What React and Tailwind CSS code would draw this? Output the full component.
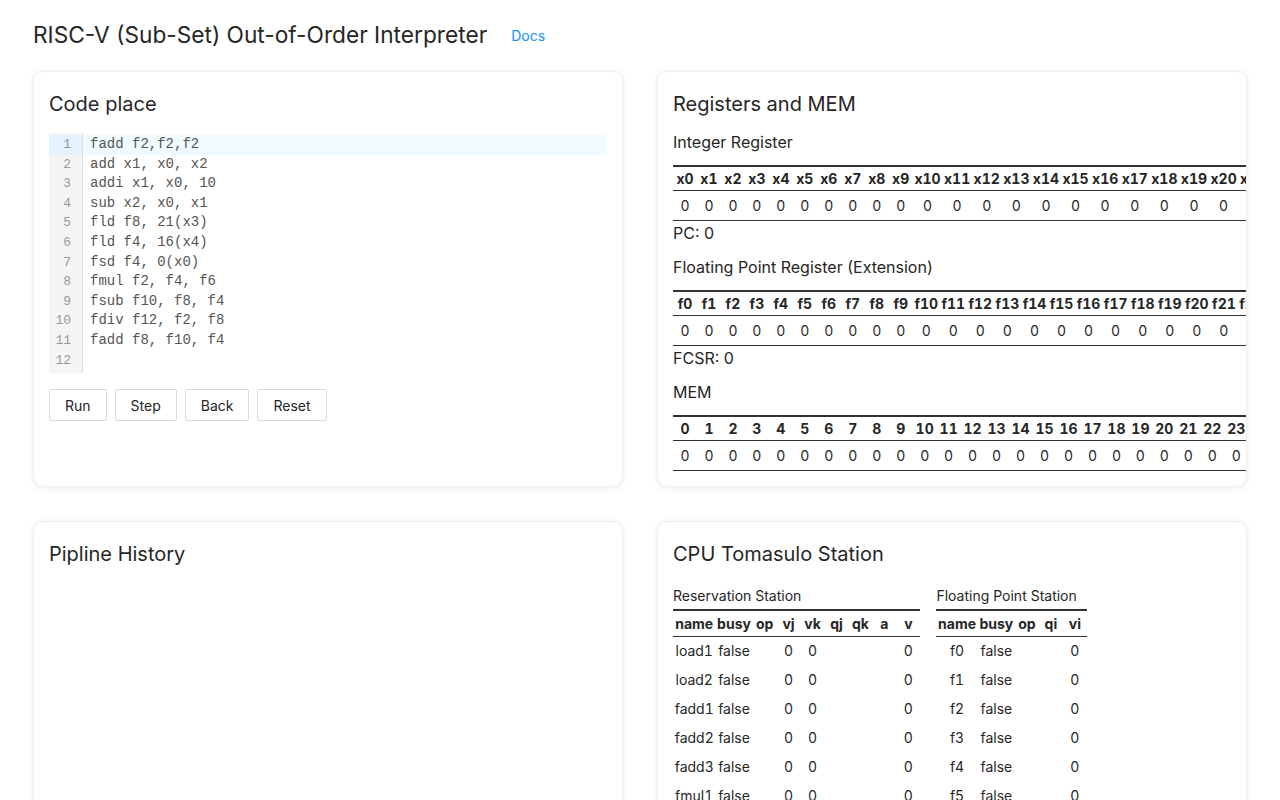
import React from 'react';

const code = [
  'fadd f2,f2,f2',
  'add x1, x0, x2',
  'addi x1, x0, 10',
  'sub x2, x0, x1',
  'fld f8, 21(x3)',
  'fld f4, 16(x4)',
  'fsd f4, 0(x0)',
  'fmul f2, f4, f6',
  'fsub f10, f8, f4',
  'fdiv f12, f2, f8',
  'fadd f8, f10, f4',
  '',
];

const range = (n) => Array.from({ length: n }, (_, i) => i);

const stations = ['load1', 'load2', 'fadd1', 'fadd2', 'fadd3', 'fmul1', 'fmul2', 'fdiv1'];

function Card({ title, children }) {
  return (
    <div className="overflow-hidden rounded-[10px] border border-[#f0f0f0] bg-white p-[15px] shadow-[0_1px_6px_rgba(0,0,0,0.08)]">
      <h2 className="text-[20px] leading-[34px] text-[#262626]">{title}</h2>
      {children}
    </div>
  );
}

function Cell({ children }) {
  return <div className="min-w-[20.6px]">{children}</div>;
}

function RegTable({ labels }) {
  return (
    <table className="border-collapse whitespace-nowrap border-t-2 border-[#333] tabular-nums">
      <thead>
        <tr className="border-b border-[#333]">
          {labels.map((l) => (
            <th key={l} className="h-[24.5px] px-[1.7px] text-center text-[14px] font-bold">
              <Cell>{l}</Cell>
            </th>
          ))}
        </tr>
      </thead>
      <tbody>
        <tr className="border-b border-[#333]">
          {labels.map((l) => (
            <td key={l} className="h-[30px] px-[1.7px] text-center text-[14px]">
              <Cell>0</Cell>
            </td>
          ))}
        </tr>
      </tbody>
    </table>
  );
}

function StationTable({ caption, cols, rows }) {
  return (
    <div>
      <div className="pb-[3px] text-[14px] leading-[20px] text-[#262626]">{caption}</div>
      <table className="border-collapse whitespace-nowrap border-t-2 border-[#333] tabular-nums">
        <thead>
          <tr className="border-b border-[#333]">
            {cols.map((c) => (
              <th key={c} className="h-[26px] px-[1.7px] text-center text-[14px] font-bold">
                <Cell>{c}</Cell>
              </th>
            ))}
          </tr>
        </thead>
        <tbody>
          {rows.map((r, i) => (
            <tr key={i}>
              {r.map((v, j) => (
                <td key={j} className="h-[29px] px-[1.7px] text-center text-[14px]">
                  <Cell>{v}</Cell>
                </td>
              ))}
            </tr>
          ))}
        </tbody>
      </table>
    </div>
  );
}

export default function App() {
  return (
    <div className="min-h-screen bg-white px-[33px] pt-[20px] pb-10 font-['Inter',sans-serif] text-[#262626]">
      <div className="flex items-center gap-6">
        <h1 className="text-[22.7px] leading-[30px]">RISC-V (Sub-Set) Out-of-Order Interpreter</h1>
        <a href="#" className="text-[14px] text-[#1890ff]">
          Docs
        </a>
      </div>

      <div className="mt-[21px] grid grid-cols-2 gap-[34px]">
        {/* Code editor */}
        <Card title="Code place">
          <div className="mt-[12px] flex font-['Liberation_Mono',monospace] text-[14px] leading-[19.6px]">
            <div className="w-[34px] shrink-0 border-r border-[#ddd] bg-[#f5f5f5] pt-[2px] pb-[3px] text-right text-[13px] text-[#999]">
              {code.map((_, i) => (
                <div key={i} className={`h-[19.6px] pr-[11px] ${i === 0 ? 'bg-[#e2f2ff]' : ''}`}>
                  {i + 1}
                </div>
              ))}
            </div>
            <div className="flex-1 pt-[2px] pb-[3px] text-[#555]">
              {code.map((line, i) => (
                <div key={i} className={`h-[19.6px] pl-[7px] whitespace-pre ${i === 0 ? 'bg-[#f1faff]' : ''}`}>
                  {line}
                </div>
              ))}
            </div>
          </div>
          <div className="mt-[16px] flex gap-2">
            {['Run', 'Step', 'Back', 'Reset'].map((b) => (
              <button
                key={b}
                className="h-8 rounded-[2px] border border-[#d9d9d9] bg-white px-[15px] text-[14px] text-[#262626]"
              >
                {b}
              </button>
            ))}
          </div>
        </Card>

        {/* Registers */}
        <Card title="Registers and MEM">
          <p className="mt-[9px] text-[16px] leading-[24px]">Integer Register</p>
          <div className="mt-[11px]">
            <RegTable labels={range(32).map((i) => `x${i}`)} />
          </div>
          <p className="text-[16px] leading-[24px]">PC: 0</p>
          <p className="mt-[10px] text-[16px] leading-[24px]">Floating Point Register (Extension)</p>
          <div className="mt-[11px]">
            <RegTable labels={range(32).map((i) => `f${i}`)} />
          </div>
          <p className="text-[16px] leading-[24px]">FCSR: 0</p>
          <p className="mt-[10px] text-[16px] leading-[24px]">MEM</p>
          <div className="mt-[11px]">
            <RegTable labels={range(32).map((i) => `${i}`)} />
          </div>
        </Card>

        <Card title="Pipline History" />

        <Card title="CPU Tomasulo Station">
          <div className="mt-[15px] flex items-start gap-4">
            <StationTable
              caption="Reservation Station"
              cols={['name', 'busy', 'op', 'vj', 'vk', 'qj', 'qk', 'a', 'v']}
              rows={stations.map((s) => [s, 'false', '', 0, 0, '', '', '', 0])}
            />
            <StationTable
              caption="Floating Point Station"
              cols={['name', 'busy', 'op', 'qi', 'vi']}
              rows={range(32).map((i) => [`f${i}`, 'false', '', '', 0])}
            />
          </div>
        </Card>
      </div>
    </div>
  );
}
